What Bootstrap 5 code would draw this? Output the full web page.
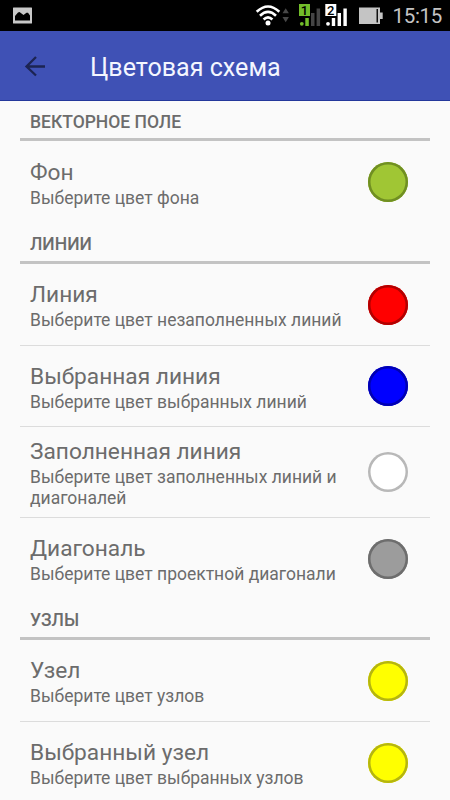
<!DOCTYPE html>
<html lang="ru">
<head>
<meta charset="utf-8">
<meta name="viewport" content="width=device-width, initial-scale=1">
<title>Цветовая схема</title>
<link href="https://cdn.jsdelivr.net/npm/bootstrap@5.3.0/dist/css/bootstrap.min.css" rel="stylesheet">
<style>
body{font-family:Roboto,"Noto Sans",sans-serif;background:#fafafa;color:#6c6c6c;height:800px}
.status{height:31px;background:#000;color:#c4c4c4}
.clock{font-size:20.5px;line-height:32px;letter-spacing:-.3px}
.topbar{height:70px;background:#3f51b5;border-bottom:1px solid #24389b;color:#f4f6ff}
.topbar h1{font-size:25.1px;line-height:32px;font-weight:400}
.prefs{padding:0 20px}
.group-head{height:41px;border-bottom:3px solid #c3c3c3;font-size:17.5px;line-height:20px;font-weight:500;padding:11px 10px 0}
.group-head.first{height:40px}
.pref{height:82px;padding:3px 22.5px 0 10px}
.pref.short{height:81px}
.pref.tall{height:91px}
.pref+.pref{border-top:1px solid #dcdcdc}
.pref-title{font-size:22.7px;line-height:27px}
.pref-sub{font-size:17.5px;line-height:21px;max-width:325px;padding-top:2px}
.swatch{width:40px;height:40px;margin-top:-3px;box-shadow:inset 0 0 0 2.5px var(--ring);border-radius:50%}
.s-green{background:#a0c634;--ring:#708f22}
.s-red{background:#f00;--ring:#b20000}
.s-blue{background:#00f;--ring:#0000b2}
.s-white{background:#fff;--ring:#b8b8b8}
.s-gray{background:#9c9c9c;--ring:#6d6d6d}
.s-yellow{background:#ff0;--ring:#b5b510}
</style>
<script src="https://cdn.jsdelivr.net/npm/bootstrap@5.3.0/dist/js/bootstrap.bundle.min.js"></script>
</head>
<body class="overflow-hidden">
<div class="status d-flex justify-content-between">
  <svg width="50" height="31"><rect x="13" y="7.5" width="19" height="16" rx=".5" fill="#c9c9c9"/><path d="M15 20.500V16l3-3.500 1.500-.5 4 3 3-2.200h1.500L30 15.500v5z" fill="#000"/></svg>
  <div class="d-flex">
    <svg width="143" height="31" viewBox="250 0 143 31">
      <g fill="none" stroke="#fff" stroke-width="2.600"><path d="M257.700 11.800Q269 1.200 280.300 11.800"/><path d="M261 15.700Q269 8 277 15.700"/><path d="M264.600 19.500Q269 15.300 273.400 19.500"/></g>
      <circle cx="269" cy="22.900" r="2.500" fill="#fff"/>
      <path d="M283.500 13.300l3.200-5 3.200 5zM283.500 17l3.200 5.200 3.200-5.200z" fill="#484848"/>
      <rect x="300" y="4" width="11" height="12" fill="#72bd2a"/><text x="305.500" y="14.500" font-size="13" font-weight="500" text-anchor="middle" fill="#000">1</text>
      <g fill="#72bd2a"><circle cx="302.800" cy="23.800" r="1.900"/><rect x="306.300" y="18" width="3.500" height="8"/></g>
      <g fill="#454545"><rect x="312" y="13" width="3.500" height="13"/><rect x="317.600" y="8.500" width="3.500" height="17.500"/></g>
      <rect x="326.300" y="4" width="11" height="12" fill="#fff"/><text x="331.800" y="14.500" font-size="13" font-weight="500" text-anchor="middle" fill="#000">2</text>
      <g fill="#fff"><circle cx="329" cy="23.800" r="1.900"/><rect x="332.800" y="18" width="3.400" height="8"/><rect x="338.600" y="13" width="3.400" height="13"/><rect x="344.400" y="8.500" width="3.400" height="17.500"/></g>
      <path d="M360 7.500h21v5h2.700v6.500H381v5h-21z" fill="#c4c4c4"/><rect x="377.500" y="9" width="1.500" height="13.500" fill="#111"/>
    </svg>
    <div class="clock pe-2">15:15</div>
  </div>
</div>
<header class="topbar d-flex align-items-center">
  <svg width="90" height="69" viewBox="0 31 90 69"><path d="M45 66.500H27M36 57l-9.500 9.500L36 75.500" fill="none" stroke="#1c2452" stroke-width="2.300"/></svg>
  <h1 class="mb-0 pt-1">Цветовая схема</h1>
</header>
<main class="prefs">
  <section>
    <h2 class="group-head first mb-0">ВЕКТОРНОЕ ПОЛЕ</h2>
    <div class="pref d-flex align-items-center justify-content-between"><div><div class="pref-title">Фон</div><div class="pref-sub">Выберите цвет фона</div></div><span class="swatch s-green flex-shrink-0"></span></div>
  </section>
  <section>
    <h2 class="group-head mb-0">ЛИНИИ</h2>
    <div class="pref short d-flex align-items-center justify-content-between"><div><div class="pref-title">Линия</div><div class="pref-sub">Выберите цвет незаполненных линий</div></div><span class="swatch s-red flex-shrink-0"></span></div>
    <div class="pref short d-flex align-items-center justify-content-between"><div><div class="pref-title">Выбранная линия</div><div class="pref-sub">Выберите цвет выбранных линий</div></div><span class="swatch s-blue flex-shrink-0"></span></div>
    <div class="pref tall d-flex align-items-center justify-content-between"><div><div class="pref-title">Заполненная линия</div><div class="pref-sub">Выберите цвет заполненных линий и диагоналей</div></div><span class="swatch s-white flex-shrink-0"></span></div>
    <div class="pref d-flex align-items-center justify-content-between"><div><div class="pref-title">Диагональ</div><div class="pref-sub">Выберите цвет проектной диагонали</div></div><span class="swatch s-gray flex-shrink-0"></span></div>
  </section>
  <section>
    <h2 class="group-head mb-0">УЗЛЫ</h2>
    <div class="pref short d-flex align-items-center justify-content-between"><div><div class="pref-title">Узел</div><div class="pref-sub">Выберите цвет узлов</div></div><span class="swatch s-yellow flex-shrink-0"></span></div>
    <div class="pref d-flex align-items-center justify-content-between"><div><div class="pref-title">Выбранный узел</div><div class="pref-sub">Выберите цвет выбранных узлов</div></div><span class="swatch s-yellow flex-shrink-0"></span></div>
  </section>
</main>
</body>
</html>
